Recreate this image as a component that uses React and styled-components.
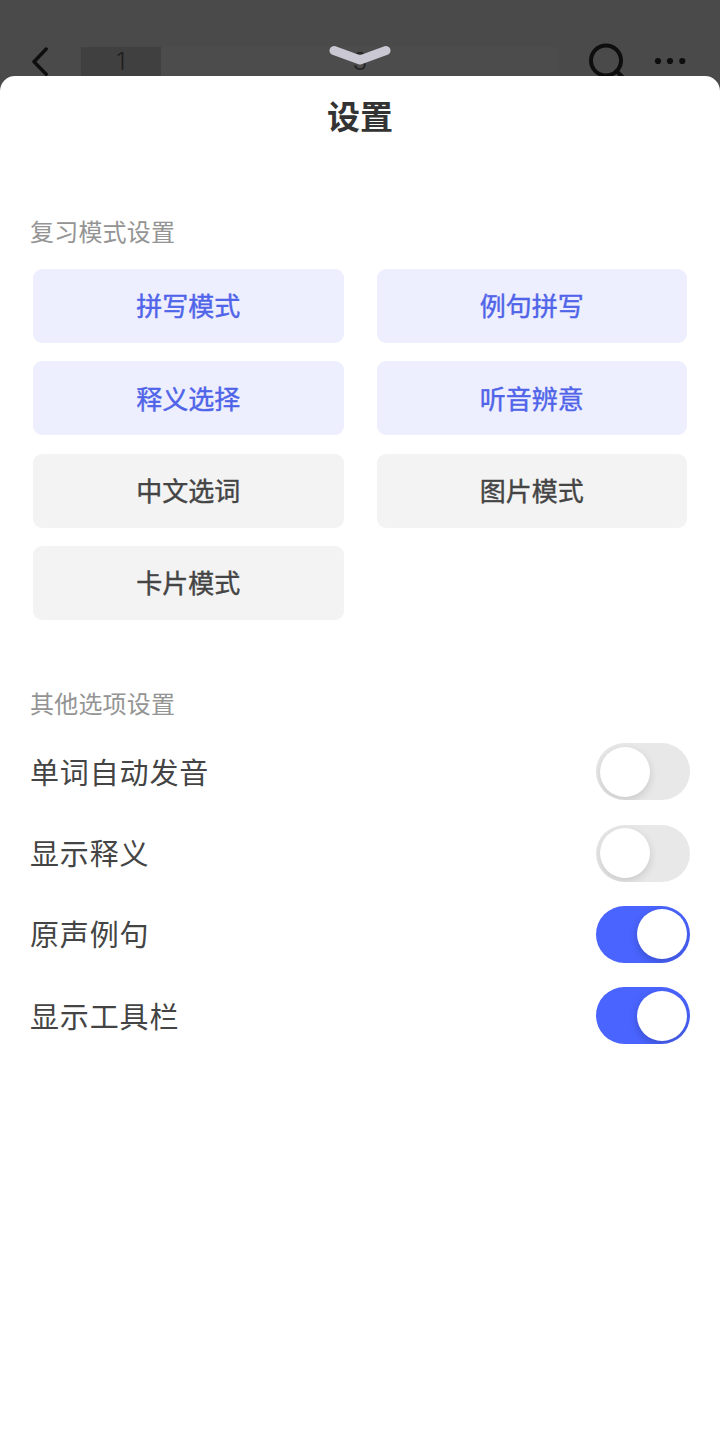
import React, { useState } from "react";
import styled, { createGlobalStyle } from "styled-components";

const MODES = [
  { label: "拼写模式", active: true },
  { label: "例句拼写", active: true },
  { label: "释义选择", active: true },
  { label: "听音辨意", active: true },
  { label: "中文选词", active: false },
  { label: "图片模式", active: false },
  { label: "卡片模式", active: false },
];

const OPTIONS = [
  { label: "单词自动发音", on: false },
  { label: "显示释义", on: false },
  { label: "原声例句", on: true },
  { label: "显示工具栏", on: true },
];

const toggleAt = (list, idx, key) =>
  list.map((item, i) => (i === idx ? { ...item, [key]: !item[key] } : item));

const TopBar = () => (
  <Bar>
    <BackIcon viewBox="0 0 20 32">
      <path d="M16.2 3 L4 15.7 L16.2 28.2" />
    </BackIcon>
    <Progress>
      <Done>1</Done>
      <Rest>3</Rest>
    </Progress>
    <SearchIcon viewBox="0 0 40 40">
      <circle cx="18" cy="17.5" r="15" />
      <path d="M28.5 28 L37 36.5" />
    </SearchIcon>
    <MoreIcon viewBox="0 0 32 8">
      <circle cx="4" cy="4" r="3.1" />
      <circle cx="16" cy="4" r="3.1" />
      <circle cx="28.3" cy="4" r="3.1" />
    </MoreIcon>
    <PullIcon viewBox="0 0 62 22">
      <path d="M5 5.5 L31 15 L57 5.5" />
    </PullIcon>
  </Bar>
);

const App = () => {
  const [modes, setModes] = useState(MODES);
  const [options, setOptions] = useState(OPTIONS);

  return (
    <>
      <GlobalStyle />
      <Screen>
        <TopBar />
        <Sheet>
          <Title>设置</Title>
          <Section>
            <SectionName>复习模式设置</SectionName>
            <ModeGrid>
              {modes.map(({ label, active }, idx) => (
                <ModeButton
                  key={label}
                  $active={active}
                  onClick={() => setModes(toggleAt(modes, idx, "active"))}
                >
                  {label}
                </ModeButton>
              ))}
            </ModeGrid>
          </Section>
          <Section>
            <SectionName>其他选项设置</SectionName>
            <OptionList>
              {options.map(({ label, on }, idx) => (
                <OptionRow key={label}>
                  <OptionName>{label}</OptionName>
                  <Switch
                    role="switch"
                    aria-checked={on}
                    $on={on}
                    onClick={() => setOptions(toggleAt(options, idx, "on"))}
                  >
                    <Knob $on={on} />
                  </Switch>
                </OptionRow>
              ))}
            </OptionList>
          </Section>
        </Sheet>
      </Screen>
    </>
  );
};

export default App;

const GlobalStyle = createGlobalStyle`
  * {
    box-sizing: border-box;
  }

  body {
    margin: 0;
    background: #4a4a4a;
    font-family: "Noto Sans CJK SC", sans-serif;
  }

  button {
    padding: 0;
    border: none;
    font-family: inherit;
    cursor: pointer;
  }
`;

const Screen = styled.div`
  display: flex;
  flex-direction: column;
  height: 1431px;
  background: #4a4a4a;
`;

const Bar = styled.header`
  position: relative;
  display: flex;
  align-items: flex-start;
  height: 76.4px;
  padding: 43px 33px 0 30px;
  overflow: hidden;
`;

const BackIcon = styled.svg`
  flex: none;
  width: 20px;
  height: 32px;
  margin-top: 3px;
  fill: none;
  stroke: #0e0e0e;
  stroke-width: 3.4;
  stroke-linecap: round;
  stroke-linejoin: round;
`;

const Progress = styled.div`
  display: flex;
  flex: none;
  width: 478px;
  height: 36px;
  margin: 3.5px 0 0 31px;
  background: #4c4c4c;
  color: #1f1f1f;
  font-family: Inter, sans-serif;
  font-size: 23.5px;
  font-weight: 300;
  line-height: 29.6px;
  text-align: center;
`;

const Done = styled.div`
  width: 79.5px;
  background: #404040;
`;

const Rest = styled.div`
  flex: 1;
`;

const SearchIcon = styled.svg`
  flex: none;
  width: 40px;
  height: 40px;
  margin-left: 29px;
  fill: none;
  stroke: #0e0e0e;
  stroke-width: 4;
  stroke-linecap: round;
`;

const MoreIcon = styled.svg`
  flex: none;
  width: 32px;
  height: 8px;
  margin: 14.3px 0 0 26px;
  fill: #0e0e0e;
`;

const PullIcon = styled.svg`
  position: absolute;
  top: 45px;
  left: 329px;
  width: 62px;
  height: 22px;
  fill: none;
  stroke: #cac8d3;
  stroke-width: 9;
  stroke-linecap: round;
  stroke-linejoin: round;
`;

const Sheet = styled.main`
  flex: 1;
  padding: 14.6px 30px 0;
  border-radius: 15px 15px 0 0;
  background: #ffffff;
`;

const Title = styled.h1`
  margin: 0 0 74px;
  color: #333333;
  font-size: 33px;
  font-weight: 700;
  line-height: 48px;
  text-align: center;
`;

const Section = styled.section`
  margin-bottom: 65px;
`;

const SectionName = styled.h2`
  margin: 0;
  color: #949494;
  font-size: 24px;
  font-weight: 400;
  letter-spacing: 0.2px;
  line-height: 36px;
`;

const ModeGrid = styled.div`
  display: grid;
  grid-template-columns: 1fr 1fr;
  gap: 18.4px 33px;
  padding: 19.8px 3px 0;
`;

const ModeButton = styled.button`
  height: 74px;
  padding-bottom: 2px;
  border-radius: 9px;
  background: ${({ $active }) => ($active ? "#edeefe" : "#f3f3f3")};
  color: ${({ $active }) => ($active ? "#4f64e8" : "#444444")};
  font-size: 26px;
  font-weight: 400;
  -webkit-text-stroke: 0.4px currentColor;
`;

const OptionList = styled.div`
  display: flex;
  flex-direction: column;
  gap: 24.3px;
  padding-top: 22.3px;
`;

const OptionRow = styled.div`
  display: flex;
  align-items: center;
  justify-content: space-between;
  height: 57px;
`;

const OptionName = styled.span`
  padding-bottom: 2px;
  color: #444444;
  font-size: 29px;
  letter-spacing: 0.85px;
`;

const Switch = styled.button`
  display: flex;
  align-items: center;
  justify-content: ${({ $on }) => ($on ? "flex-end" : "flex-start")};
  width: 94px;
  height: 57px;
  margin-right: -0.4px;
  padding: 0 3.5px;
  border-radius: 29px;
  background: ${({ $on }) => ($on ? "#4a64ff" : "#e8e8e8")};
  overflow: hidden;
`;

const Knob = styled.span`
  width: 50px;
  height: 50px;
  border-radius: 50%;
  background: #ffffff;
  box-shadow: 0 3px 8px rgba(0, 0, 0, ${({ $on }) => ($on ? 0.2 : 0.14)});
`;
